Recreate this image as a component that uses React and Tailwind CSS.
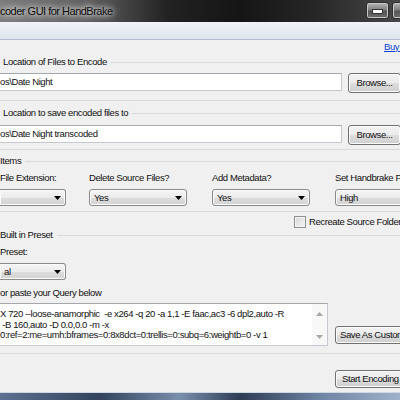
import React from 'react';

function Arrow({ color = '#000' }) {
  return (
    <svg width="7" height="4" viewBox="0 0 7 4">
      <path d="M0 0h7L3.5 4z" fill={color} />
    </svg>
  );
}

function GroupHeader({ label, className = '' }) {
  return (
    <div className={`h-[12px] flex items-center ${className}`}>
      <span className="pl-[3px] whitespace-nowrap leading-none">{label}</span>
      <div className="flex-1 h-px bg-[#d5d9de] ml-[4px]" />
    </div>
  );
}

function Rule({ className = '' }) {
  return <div className={`h-px bg-[#d5d9de] shrink-0 ${className}`} />;
}

function Button({ children, className = '' }) {
  return (
    <div
      className={`shrink-0 rounded-[3px] border border-[#707070] bg-[linear-gradient(180deg,#f2f2f2_0%,#ebebeb_50%,#dddddd_51%,#cfcfcf_100%)] shadow-[inset_0_0_0_1px_#fbfbfb] flex items-center whitespace-nowrap leading-none ${className}`}
    >
      {children}
    </div>
  );
}

function Select({ value, className = '' }) {
  return (
    <div
      className={`h-[17px] shrink-0 rounded-[3px] border border-[#8a8a8a] bg-[linear-gradient(180deg,#f5f5f5_0%,#ebebeb_50%,#dddddd_51%,#d3d3d3_100%)] shadow-[inset_0_0_0_1px_#fbfbfb] flex items-center pl-[4px] pr-[4px] leading-none ${className}`}
    >
      <span className="flex-1 whitespace-nowrap">{value}</span>
      <Arrow />
    </div>
  );
}

function TextBox({ value }) {
  return (
    <div className="w-[342px] h-[18px] shrink-0 bg-white border border-l-0 border-[#c5c8ce] border-t-[#a3a7ae] flex items-center whitespace-nowrap leading-none">
      {value}
    </div>
  );
}

export default function App() {
  return (
    <div className="w-[400px] h-[400px] overflow-hidden bg-[#f0f0f0] flex flex-col text-[9.5px] tracking-[-0.4px] text-[#111] font-['Liberation_Sans',Arial,sans-serif]">
      {/* title bar */}
      <div className="h-[22px] shrink-0 flex items-start bg-[linear-gradient(90deg,#7c7c7c_0%,#606060_22%,#222_42%,#151515_60%,#262626_78%,#484848_100%)]">
        <span className="mt-[6px] text-[11px] tracking-[-0.5px] leading-none text-[#0a0a0a] whitespace-nowrap [text-shadow:0_0_5px_#fff,0_0_9px_#eee]">
          coder GUI for HandBrake
        </span>
        <div className="ml-auto mr-[-15px] mt-[2px] flex gap-[3px]">
          <div className="w-[23px] h-[17px] rounded-[3px] border border-[#2e2e2e] bg-[linear-gradient(180deg,#b5b5b5_0%,#7c7c7c_48%,#545454_52%,#6e6e6e_100%)] shadow-[inset_0_0_0_1px_#c8c8c8] flex items-end justify-center pb-[4px]">
            <div className="w-[9px] h-[3px] bg-white border border-[#333] box-content" />
          </div>
          <div className="w-[23px] h-[17px] rounded-[3px] border border-[#2e2e2e] bg-[linear-gradient(180deg,#b5b5b5_0%,#7c7c7c_48%,#545454_52%,#6e6e6e_100%)] shadow-[inset_0_0_0_1px_#c8c8c8]" />
        </div>
      </div>

      {/* strip */}
      <div className="h-[18px] shrink-0 bg-[linear-gradient(180deg,#f1f3f8,#dfe4ee)] border-b border-[#b3bece]" />

      {/* body */}
      <div className="flex-1 flex flex-col">
        <div className="h-[13px] flex items-center pl-[384px]">
          <span className="text-[#0b3fd6] underline whitespace-nowrap leading-none">Buy Now</span>
        </div>

        <GroupHeader label="Location of Files to Encode" className="mt-[3px]" />
        <div className="mt-[5px] h-[20px] flex items-start">
          <TextBox value="os\Date Night" />
          <Button className="ml-[6px] w-[53px] h-[20px] justify-center">Browse...</Button>
        </div>
        <Rule className="mt-[7px]" />

        <GroupHeader label="Location to save encoded files to" className="mt-[6px]" />
        <div className="mt-[6px] h-[20px] flex items-start">
          <TextBox value="os\Date Night transcoded" />
          <Button className="ml-[6px] w-[53px] h-[20px] justify-center">Browse...</Button>
        </div>
        <Rule className="mt-[4px]" />

        <div className="mt-[5px] h-[12px] flex items-center">
          <span className="whitespace-nowrap leading-none">Items</span>
          <div className="flex-1 h-px bg-[#d5d9de] ml-[4px]" />
        </div>

        <div className="mt-[5px] h-[12px] grid grid-cols-[89px_123px_123px_140px] items-center leading-none whitespace-nowrap">
          <span>File Extension:</span>
          <span>Delete Source Files?</span>
          <span>Add Metadata?</span>
          <span>Set Handbrake Priority:</span>
        </div>
        <div className="mt-[5px] grid grid-cols-[89px_123px_123px_140px]">
          <Select value="" className="w-[66px] border-l-0 rounded-l-none" />
          <Select value="Yes" className="w-[98px]" />
          <Select value="Yes" className="w-[98px]" />
          <Select value="High" className="w-[110px]" />
        </div>
        <Rule className="mt-[5px]" />

        <div className="mt-[4px] h-[12px] flex items-center pl-[294px]">
          <div className="w-[12px] h-[12px] shrink-0 border border-[#8e8f8f] bg-[linear-gradient(135deg,#d6d6d6,#f7f7f7)] shadow-[inset_0_0_0_1px_#f4f4f4]" />
          <span className="ml-[3px] whitespace-nowrap leading-none">Recreate Source Folder</span>
        </div>

        <div className="mt-[1px] h-[12px] flex items-center">
          <span className="whitespace-nowrap leading-none">Built in Preset</span>
          <div className="flex-1 h-px bg-[#d5d9de] ml-[4px]" />
        </div>
        <div className="mt-[5px] h-[12px] flex items-center leading-none">Preset:</div>
        <Select value="al" className="mt-[5px] w-[66px] h-[16px] border-l-0 rounded-l-none pl-0" />
        <div className="mt-[7px] h-[12px] flex items-center leading-none whitespace-nowrap">or paste your Query below</div>

        <div className="mt-[4px] h-[43px] flex items-end shrink-0">
          <div className="w-[328px] h-[43px] shrink-0 bg-white border border-l-0 border-[#c5c8ce] border-t-[#a3a7ae] flex">
            <div className="flex-1 pt-[5px] leading-[10.5px] whitespace-pre overflow-hidden">
              <div>X 720 --loose-anamorphic  -e x264 -q 20 -a 1,1 -E faac,ac3 -6 dpl2,auto -R</div>
              <div> -B 160,auto -D 0.0,0.0 -m -x</div>
              <div>0:ref=2:me=umh:bframes=0:8x8dct=0:trellis=0:subq=6:weightb=0 -v 1</div>
            </div>
            <div className="w-[15px] shrink-0 bg-[#f8f8f8] flex flex-col items-center justify-between pt-[8px] pb-[6px]">
              <svg width="7" height="4" viewBox="0 0 7 4"><path d="M0 4h7L3.5 0z" fill="#a8a8a8" /></svg>
              <Arrow color="#a8a8a8" />
            </div>
          </div>
          <Button className="ml-[7px] mb-[2px] w-[110px] h-[18px] pl-[4px]">Save As Custom Preset</Button>
        </div>
        <Rule className="mt-[7px]" />

        <div className="mt-[16px] flex">
          <Button className="ml-[335px] w-[70px] h-[18px] pl-[6px]">Start Encoding</Button>
        </div>
      </div>

      {/* bottom frame */}
      <div className="h-[8px] shrink-0 border-t border-[#cfd7e2] bg-[linear-gradient(90deg,#5d7190_0%,#33435c_25%,#7a8fac_45%,#2e3c54_60%,#6f84a3_80%,#9fb2ca_100%)]" />
    </div>
  );
}
